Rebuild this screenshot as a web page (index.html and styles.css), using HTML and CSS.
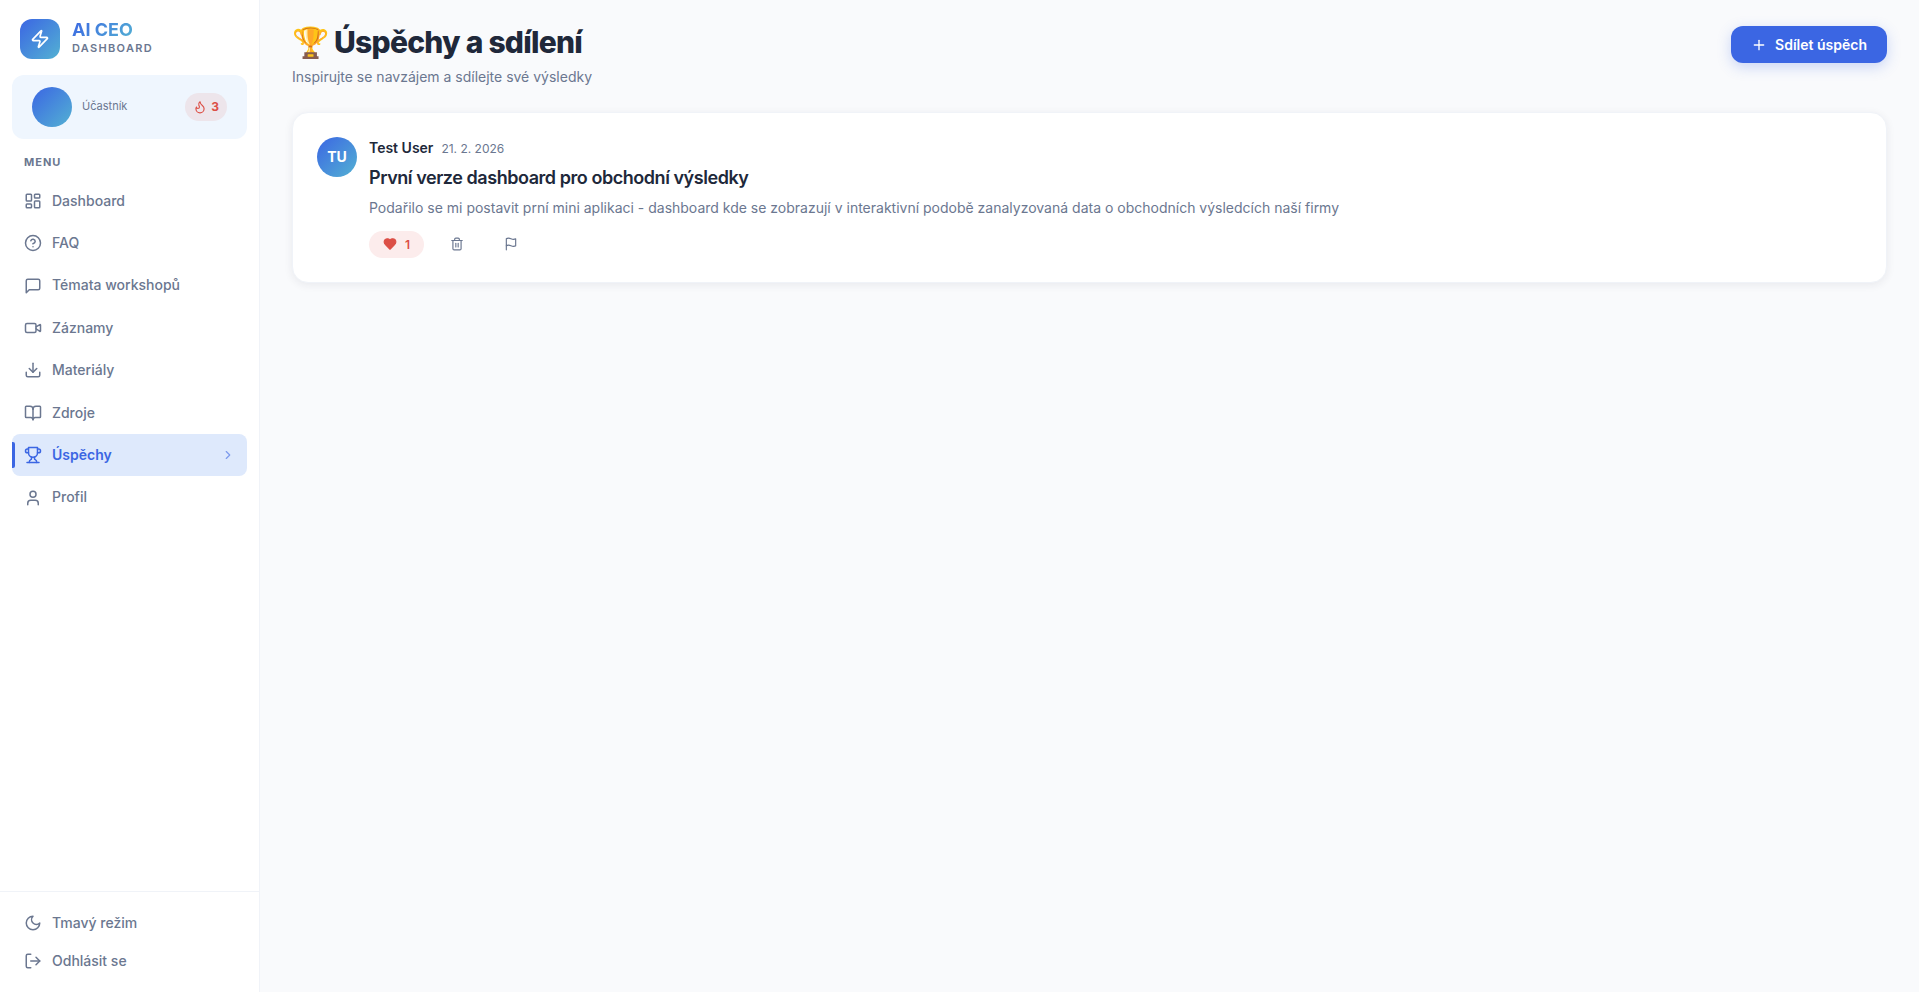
FILE: index.html
```html
<!DOCTYPE html>
<html lang="cs">
<head>
<meta charset="utf-8">
<meta name="viewport" content="width=device-width, initial-scale=1">
<title>Úspěchy a sdílení – AI CEO Dashboard</title>
<link rel="stylesheet" href="styles.css">
</head>
<body>
<div class="app">
  <aside class="sidebar">
    <div class="brand">
      <div class="brand-logo">
        <svg class="icon" width="20" height="20" viewBox="0 0 24 24"><path d="M4 14a1 1 0 0 1-.78-1.63l9.9-10.2a.5.5 0 0 1 .86.46l-1.92 6.02A1 1 0 0 0 13 10h7a1 1 0 0 1 .78 1.63l-9.9 10.2a.5.5 0 0 1-.86-.46l1.92-6.02A1 1 0 0 0 11 14z"/></svg>
      </div>
      <div class="brand-text">
        <span class="brand-name">AI CEO</span>
        <span class="brand-sub">DASHBOARD</span>
      </div>
    </div>
    <div class="user-card">
      <div class="avatar"></div>
      <span class="user-role">Účastník</span>
      <span class="streak">
        <svg class="icon" width="14" height="14" viewBox="0 0 24 24"><path d="M8.5 14.5A2.5 2.5 0 0 0 11 12c0-1.38-.5-2-1-3-1.072-2.143-.224-4.054 2-6 .5 2.5 2 4.9 4 6.5 2 1.6 3 3.5 3 5.5a7 7 0 1 1-14 0c0-1.153.433-2.294 1-3a2.5 2.5 0 0 0 2.5 2.5z"/></svg>
        3
      </span>
    </div>
    <nav class="nav" aria-label="Menu">
      <span class="nav-label">MENU</span>
      <a class="nav-item" href="#dashboard"><svg class="icon" width="18" height="18" viewBox="0 0 24 24"><rect width="7" height="9" x="3" y="3" rx="1"/><rect width="7" height="5" x="14" y="3" rx="1"/><rect width="7" height="9" x="14" y="12" rx="1"/><rect width="7" height="5" x="3" y="16" rx="1"/></svg>Dashboard</a>
      <a class="nav-item" href="#faq"><svg class="icon" width="18" height="18" viewBox="0 0 24 24"><circle cx="12" cy="12" r="10"/><path d="M9.09 9a3 3 0 0 1 5.83 1c0 2-3 3-3 3"/><path d="M12 17h.01"/></svg>FAQ</a>
      <a class="nav-item" href="#temata"><svg class="icon" width="18" height="18" viewBox="0 0 24 24"><path d="M21 15a2 2 0 0 1-2 2H7l-4 4V5a2 2 0 0 1 2-2h14a2 2 0 0 1 2 2z"/></svg>Témata workshopů</a>
      <a class="nav-item" href="#zaznamy"><svg class="icon" width="18" height="18" viewBox="0 0 24 24"><path d="m16 13 5.223 3.482a.5.5 0 0 0 .777-.416V7.87a.5.5 0 0 0-.752-.432L16 10.5"/><rect x="2" y="6" width="14" height="12" rx="2"/></svg>Záznamy</a>
      <a class="nav-item" href="#materialy"><svg class="icon" width="18" height="18" viewBox="0 0 24 24"><path d="M21 15v4a2 2 0 0 1-2 2H5a2 2 0 0 1-2-2v-4"/><path d="m7 10 5 5 5-5"/><path d="M12 15V3"/></svg>Materiály</a>
      <a class="nav-item" href="#zdroje"><svg class="icon" width="18" height="18" viewBox="0 0 24 24"><path d="M12 7v14"/><path d="M3 18a1 1 0 0 1-1-1V4a1 1 0 0 1 1-1h5a4 4 0 0 1 4 4 4 4 0 0 1 4-4h5a1 1 0 0 1 1 1v13a1 1 0 0 1-1 1h-6a3 3 0 0 0-3 3 3 3 0 0 0-3-3z"/></svg>Zdroje</a>
      <a class="nav-item nav-item-active" href="#uspechy" aria-current="page"><svg class="icon" width="18" height="18" viewBox="0 0 24 24"><path d="M6 9H4.500a2.500 2.500 0 0 1 0-5H6"/><path d="M18 9h1.500a2.500 2.500 0 0 0 0-5H18"/><path d="M4 22h16"/><path d="M10 14.660V17c0 .550-.470.980-.970 1.210C7.850 18.750 7 20.240 7 22"/><path d="M14 14.660V17c0 .550.470.980.970 1.210C16.150 18.750 17 20.240 17 22"/><path d="M18 2H6v7a6 6 0 0 0 12 0V2Z"/></svg>Úspěchy<svg class="icon nav-chevron" width="14" height="14" viewBox="0 0 24 24"><path d="m9 18 6-6-6-6"/></svg></a>
      <a class="nav-item" href="#profil"><svg class="icon" width="18" height="18" viewBox="0 0 24 24"><path d="M19 21v-2a4 4 0 0 0-4-4H9a4 4 0 0 0-4 4v2"/><circle cx="12" cy="7" r="4"/></svg>Profil</a>
    </nav>
    <div class="sidebar-footer">
      <button class="footer-item" type="button"><svg class="icon" width="18" height="18" viewBox="0 0 24 24"><path d="M12 3a6 6 0 0 0 9 9 9 9 0 1 1-9-9Z"/></svg>Tmavý režim</button>
      <button class="footer-item" type="button"><svg class="icon" width="18" height="18" viewBox="0 0 24 24"><path d="M9 21H5a2 2 0 0 1-2-2V5a2 2 0 0 1 2-2h4"/><path d="m16 17 5-5-5-5"/><path d="M21 12H9"/></svg>Odhlásit se</button>
    </div>
  </aside>
  <main class="main">
    <header class="page-header">
      <div>
        <h1 class="page-title">🏆 Úspěchy a sdílení</h1>
        <p class="page-sub">Inspirujte se navzájem a sdílejte své výsledky</p>
      </div>
      <button class="share-btn" type="button"><svg class="icon" width="16" height="16" viewBox="0 0 24 24"><path d="M5 12h14"/><path d="M12 5v14"/></svg>Sdílet úspěch</button>
    </header>
    <article class="card">
      <div class="avatar">TU</div>
      <div class="card-body">
        <div class="card-meta"><span class="author">Test User</span><time class="date" datetime="2026-02-21">21. 2. 2026</time></div>
        <h2 class="card-title">První verze dashboard pro obchodní výsledky</h2>
        <p class="card-text">Podařilo se mi postavit prní mini aplikaci - dashboard kde se zobrazují v interaktivní podobě zanalyzovaná data o obchodních výsledcích naší firmy</p>
        <div class="actions">
          <button class="action action-liked" type="button" aria-label="To se mi líbí, 1"><svg class="icon icon-filled" width="14" height="14" viewBox="0 0 24 24"><path d="M19 14c1.490-1.460 3-3.210 3-5.500A5.500 5.500 0 0 0 16.500 3c-1.760 0-3 .5-4.500 2-1.500-1.500-2.740-2-4.500-2A5.500 5.500 0 0 0 2 8.500c0 2.300 1.500 4.050 3 5.500l7 7Z"/></svg>1</button>
          <button class="action" type="button" aria-label="Smazat"><svg class="icon" width="14" height="14" viewBox="0 0 24 24"><path d="M3 6h18"/><path d="M19 6v14a2 2 0 0 1-2 2H7a2 2 0 0 1-2-2V6"/><path d="M8 6V4a2 2 0 0 1 2-2h4a2 2 0 0 1 2 2v2"/><path d="M10 11v6"/><path d="M14 11v6"/></svg></button>
          <button class="action" type="button" aria-label="Nahlásit"><svg class="icon" width="14" height="14" viewBox="0 0 24 24"><path d="M4 15s1-1 4-1 5 2 8 2 4-1 4-1V3s-1 1-4 1-5-2-8-2-4 1-4 1z"/><path d="M4 22v-7"/></svg></button>
        </div>
      </div>
    </article>
  </main>
</div>
</body>
</html>
```
FILE: styles.css
```css
:root {
  --primary: #3b66e3;
  --gradient: linear-gradient(135deg, #3b66e3, #53b1d3);
  --ink: #20283a;
  --muted: #6b7790;
  --red: #dc4f46;
}

* { box-sizing: border-box; }

body {
  margin: 0;
  background: #f9fafc;
  color: var(--ink);
  font-family: Inter, "Liberation Sans", sans-serif;
  font-size: 14px;
  line-height: 1.6;
}

button { font: inherit; border: 0; background: none; cursor: pointer; }

h1, h2, p { margin: 0; }

h1, h2 { letter-spacing: -0.025em; }

.icon {
  flex: none;
  fill: none;
  stroke: currentColor;
  stroke-width: 2;
  stroke-linecap: round;
  stroke-linejoin: round;
}

.icon-filled { fill: currentColor; }

.app { display: flex; min-height: 100vh; }

.sidebar {
  flex: none;
  display: flex;
  flex-direction: column;
  width: 260px;
  background: #fff;
  border-right: 1px solid #f0f3f8;
}

.brand {
  display: flex;
  align-items: center;
  gap: 12px;
  padding: 19px 20px 16px;
}

.brand-logo {
  display: grid;
  place-items: center;
  width: 40px;
  height: 40px;
  border-radius: 12px;
  background: var(--gradient);
  color: #fff;
}

.brand-text {
  display: flex;
  flex-direction: column;
  align-items: flex-start;
  padding-bottom: 2px;
}

.brand-name {
  background: var(--gradient);
  background-clip: text;
  -webkit-background-clip: text;
  color: transparent;
  font-size: 18px;
  font-weight: 700;
  line-height: 20px;
}

.brand-sub {
  color: var(--muted);
  font-size: 11px;
  font-weight: 600;
  letter-spacing: 0.12em;
  line-height: 16px;
}

.user-card {
  display: flex;
  align-items: center;
  gap: 10px;
  margin: 0 12px;
  padding: 12px 20px;
  border-radius: 12px;
  background: #eff6fe;
}

.avatar {
  flex: none;
  display: grid;
  place-items: center;
  width: 40px;
  height: 40px;
  border-radius: 50%;
  background: var(--gradient);
  color: #fff;
  font-weight: 700;
}

.user-role { flex: 1; color: var(--muted); font-size: 11px; }

.streak {
  display: flex;
  align-items: center;
  gap: 4px;
  padding: 4px 8px;
  border-radius: 14px;
  background: #ede5eb;
  color: var(--red);
  font-size: 12px;
  font-weight: 700;
  line-height: 20px;
}

.nav { flex: 1; display: flex; flex-direction: column; padding: 12px; }

.nav-label {
  padding: 3px 12px 8px;
  color: var(--muted);
  font-size: 11px;
  font-weight: 700;
  letter-spacing: 1px;
}

.nav-item,
.footer-item {
  display: flex;
  align-items: center;
  gap: 10px;
  padding: 10px 12px;
  border-radius: 8px;
  color: var(--muted);
  font-weight: 500;
  text-decoration: none;
}

.nav-item-active {
  position: relative;
  background: #dee9fc;
  color: var(--primary);
  font-weight: 600;
}

.nav-item-active::before {
  content: "";
  position: absolute;
  left: 0;
  top: 8px;
  bottom: 8px;
  width: 3px;
  border-radius: 0 2px 2px 0;
  background: var(--primary);
}

.nav-chevron { margin-left: auto; opacity: 0.6; }

.sidebar-footer {
  display: flex;
  flex-direction: column;
  padding: 12px;
  border-top: 1px solid #f0f3f8;
}

.footer-item { padding: 8px 12px; line-height: 22px; }

.main { flex: 1; min-width: 0; padding: 20px 32px; }

.page-header {
  display: flex;
  align-items: flex-start;
  justify-content: space-between;
  gap: 24px;
  margin-bottom: 24px;
}

.page-title {
  font-size: 30px;
  font-weight: 800;
  line-height: 44px;
}

.page-sub { margin-top: 2px; color: var(--muted); }

.share-btn {
  display: flex;
  align-items: center;
  gap: 8px;
  margin-top: 6px;
  padding: 8px 20px;
  border-radius: 12px;
  background: var(--primary);
  box-shadow: 0 4px 14px rgba(59, 102, 227, 0.25);
  color: #fff;
  font-weight: 600;
  line-height: 21px;
}

.card {
  display: flex;
  gap: 12px;
  padding: 24px;
  border: 1px solid #f0f3f8;
  border-radius: 16px;
  background: #fff;
  box-shadow: 0 2px 8px rgba(32, 40, 58, 0.08);
}

.card-body { flex: 1; min-width: 0; }

.card-meta { display: flex; align-items: center; gap: 8px; margin-bottom: 4px; }

.author { font-weight: 600; }

.date { color: var(--muted); font-size: 12px; }

.card-title { margin-bottom: 4px; font-size: 18px; font-weight: 600; }

.card-text { margin-bottom: 12px; color: var(--muted); }

.actions { display: flex; gap: 12px; }

.action {
  display: flex;
  align-items: center;
  gap: 8px;
  padding: 4px 14px;
  border-radius: 14px;
  color: var(--muted);
  font-size: 12px;
  font-weight: 600;
  line-height: 19px;
}

.action-liked { background: #fcecec; color: var(--red); }
```
